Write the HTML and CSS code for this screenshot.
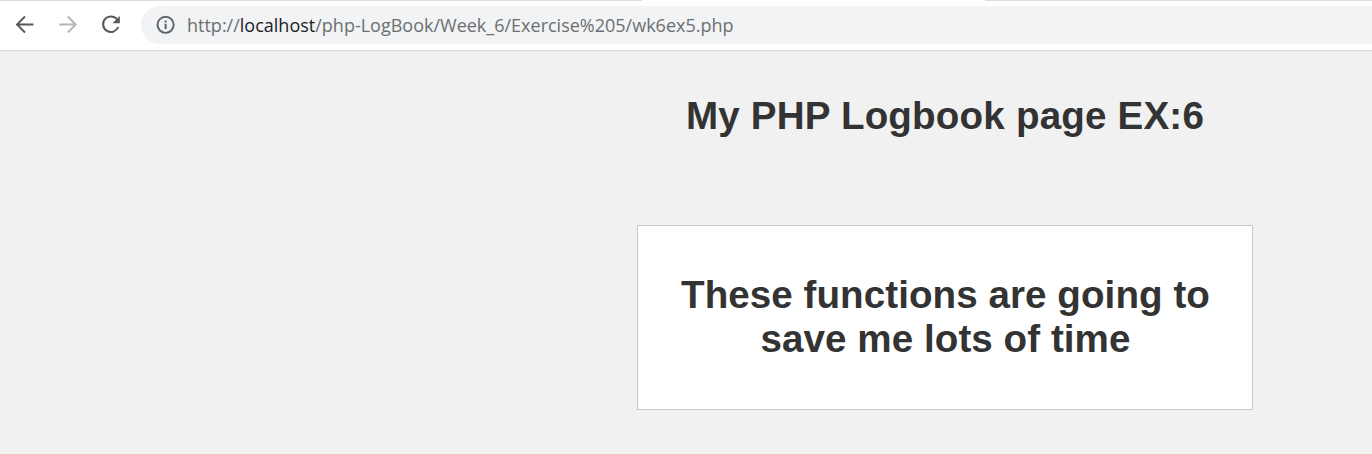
FILE: index.html
```html
<!DOCTYPE html>
<html lang="en">
<head>
<meta charset="utf-8">
<title>My PHP Logbook page</title>
<link rel="stylesheet" href="styles.css">
</head>
<body>
<header class="browser">
  <div class="tab-edge"><span class="edge-left"></span><span class="edge-right"></span></div>
  <div class="toolbar">
    <nav class="controls">
      <svg class="icon" viewBox="0 0 22 22"><path d="M19.5 10.5H3.2M11 2.5l-8 8 8 8" fill="none" stroke="#55585c" stroke-width="1.9"/></svg>
      <svg class="icon" viewBox="0 0 22 22"><path d="M2.2 10.5h16.3M10.8 2.5l8 8-8 8" fill="none" stroke="#b5b6b7" stroke-width="1.9"/></svg>
      <svg class="icon" viewBox="0 0 22 22"><path d="M16.9 5.2A7.8 7.8 0 1 0 18.2 13" fill="none" stroke="#55585c" stroke-width="2"/><path d="M19.8 2v7.3h-7.3z" fill="#55585c"/></svg>
    </nav>
    <div class="address">
      <svg class="info" viewBox="0 0 20 20"><circle cx="9.6" cy="9.8" r="8.1" fill="none" stroke="#5f6368" stroke-width="1.9"/><path d="M8.6 8.8h2v5.2h-2zM8.6 5.4h2v2h-2z" fill="#5f6368"/></svg>
      <span class="url">http://<span class="host">localhost</span>/php-LogBook/Week_6/Exercise%205/wk6ex5.php</span>
    </div>
  </div>
</header>
<main class="page">
  <h1 class="title">My PHP Logbook page EX:6</h1>
  <section class="panel">
    <h1 class="message">These functions are going to save me lots of time</h1>
  </section>
</main>
</body>
</html>
```
FILE: styles.css
```css
* { box-sizing: border-box; }
body {
  margin: 0;
  height: 454px;
  overflow: hidden;
  background: #f1f1f1;
  color: #333;
  font-family: "Liberation Sans", Arial, sans-serif;
}
.browser {
  height: 51px;
  background: #fff;
  border-bottom: 1px solid #d9dadb;
}
.tab-edge {
  display: flex;
  justify-content: space-between;
  height: 1px;
}
.edge-left, .edge-right { background: #dcdddd; }
.edge-left { width: 642px; }
.edge-right { width: 387px; }
.toolbar {
  display: flex;
  padding: 5px 0 0 14px;
}
.controls {
  display: flex;
  align-items: center;
  gap: 21px;
  width: 127px;
  height: 38px;
}
.icon { width: 22px; height: 22px; flex: none; }
.address {
  display: flex;
  align-items: center;
  gap: 11px;
  flex: 1;
  height: 38px;
  padding-left: 15px;
  border-radius: 19px 0 0 19px;
  background: #f1f3f4;
}
.info { width: 20px; height: 20px; flex: none; }
.url {
  color: #6c6f72;
  font: 18px/24px "Open Sans", "Noto Sans", sans-serif;
  white-space: nowrap;
}
.host { color: #202124; }
.page {
  width: 616px;
  margin-left: 637px;
  padding-top: 43px;
  text-align: center;
}
.title, .message {
  margin: 0;
  font-size: 38.6px;
  line-height: 44px;
}
.title { letter-spacing: 0.18px; }
.message { letter-spacing: 0.06px; }
.panel {
  height: 185px;
  margin-top: 87px;
  padding: 47px 35px 47px 36px;
  background: #fff;
  border: 1px solid #c8c8c8;
}
```
